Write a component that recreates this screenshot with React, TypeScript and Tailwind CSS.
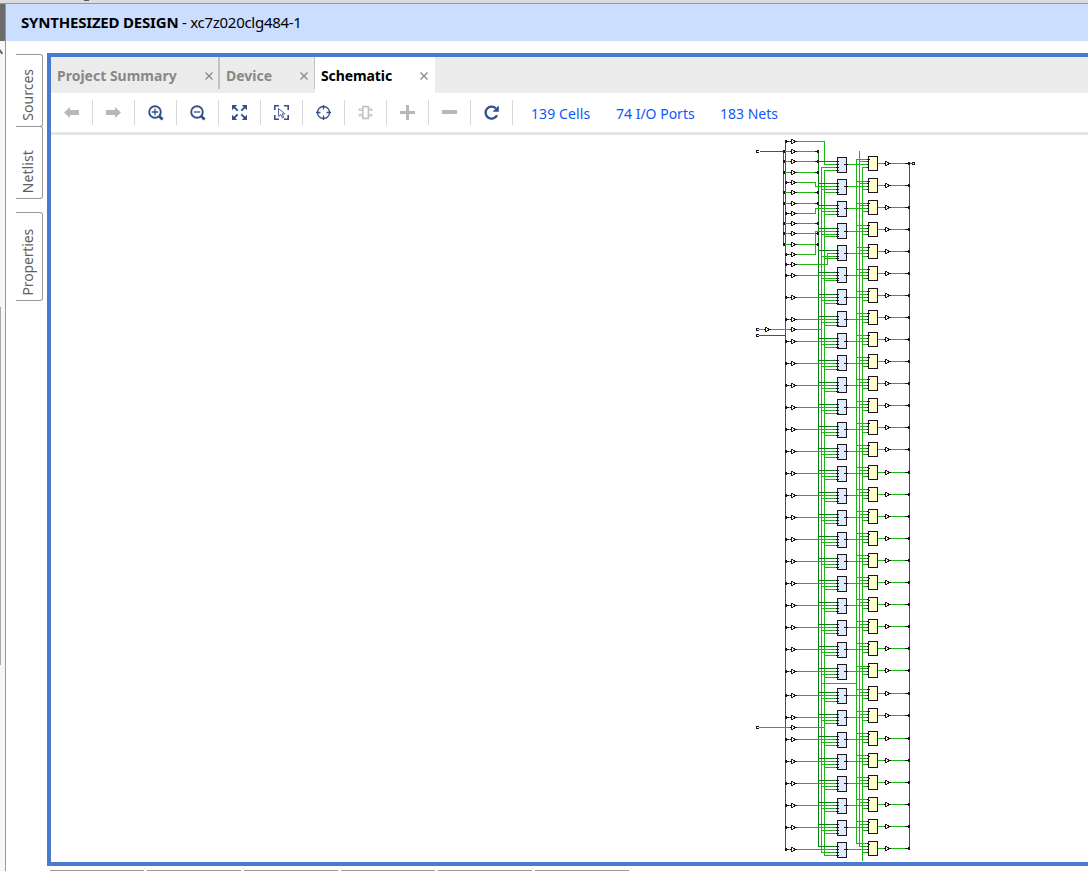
import React from "react";

const LIGHT = "#1eb414";
const DARK = "#078012";
const INK = "#1b1620";

const range = (from: number, count: number, step = 22) =>
  Array.from({ length: count }, (_, i) => from + i * step);

const lutRows = [164, 186, 208, 231, 253, ...range(275, 19), ...range(695, 8)];
const regRows = [...range(163, 14), ...range(472, 10), 693, 715, 738, 760, 782, 804, 826, 848];
const busARows = [151, 161, 172, 192, 203, 223, 233, 244];
const busBRows = [141, 182, 213, 254, 264, ...range(275, 19), ...range(695, 8)];

type LineProps = { y: number; a: number; b: number; c?: string };

/* Horizontal wire covering pixel columns a..b */
const H = ({ y, a, b, c = LIGHT }: LineProps) => (
  <rect x={a} y={y} width={b - a + 1} height={1} fill={c} />
);

type ColProps = { x: number; a: number; b: number; c?: string };

/* Vertical wire covering pixel rows a..b */
const V = ({ x, a, b, c = LIGHT }: ColProps) => (
  <rect x={x} y={a} width={1} height={b - a + 1} fill={c} />
);

const Dot = ({ x, y }: { x: number; y: number }) => (
  <rect x={x} y={y - 1} width={2} height={3} fill={INK} />
);

const Buf = ({ x, y }: { x: number; y: number }) => (
  <g fill={INK}>
    <rect x={x} y={y - 2} width={1} height={5} />
    <rect x={x + 1} y={y - 2} width={1} height={1} />
    <rect x={x + 1} y={y + 2} width={1} height={1} />
    <rect x={x + 1} y={y - 1} width={2} height={3} fill="#fffbd0" />
    <rect x={x + 2} y={y - 1} width={1} height={1} />
    <rect x={x + 2} y={y + 1} width={1} height={1} />
    <rect x={x + 3} y={y - 1} width={1} height={3} />
    <rect x={x + 3} y={y} width={3} height={1} />
    <rect x={x - 1} y={y} width={1} height={1} />
  </g>
);

const Port = ({ x, y, flip }: { x: number; y: number; flip?: boolean }) => (
  <g fill={INK}>
    <rect x={x} y={y - 1} width={3} height={1} />
    <rect x={x} y={y + 1} width={3} height={1} />
    <rect x={flip ? x + 2 : x} y={y - 1} width={1} height={3} />
  </g>
);

function Schematic() {
  return (
    <svg
      className="block h-[727px] w-[1037px]"
      viewBox="51 135 1037 727"
      shapeRendering="crispEdges"
    >
      <V x={783} a={151} b={244} c={DARK} />
      <V x={785} a={141} b={849} c={DARK} />
      <V x={818} a={151} b={846} c={DARK} />
      <V x={821} a={167} b={852} />
      <V x={824} a={170} b={855} />
      <V x={856} a={159} b={843} />
      <V x={859} a={151} b={846} />
      <V x={862} a={167} b={860} />
      <V x={909} a={163} b={848} c={DARK} />

      <H y={151} a={760} b={783} c={DARK} />
      <Port x={756} y={151} />
      <H y={329} a={759} b={821} />
      <Port x={756} y={329} />
      <Buf x={765} y={329} />
      <Buf x={791} y={329} />
      <H y={335} a={759} b={785} c={DARK} />
      <Port x={756} y={335} />
      <H y={727} a={759} b={824} />
      <Port x={756} y={727} />
      <Buf x={791} y={727} />
      <H y={683} a={821} b={856} />

      {busARows.map((y) => (
        <g key={y}>
          <H y={y} a={785} b={818} />
          <Dot x={783} y={y} />
          <Buf x={791} y={y} />
          <H y={y} a={815} b={817} c={INK} />
          <Dot x={817} y={y} />
        </g>
      ))}

      <H y={141} a={796} b={824} />
      <V x={824} a={141} b={164} />
      <H y={182} a={796} b={815} />
      <V x={815} a={182} b={186} />
      <H y={213} a={796} b={815} />
      <V x={815} a={208} b={213} />
      <H y={254} a={796} b={815} />
      <V x={815} a={231} b={254} />
      <H y={264} a={796} b={827} />
      <V x={827} a={253} b={264} />

      {lutRows.map((y, i) => {
        const starts = [824, 815, 815, 815, 827];
        const last = i >= 3 && i <= 5 ? y + 5 : y + 6;
        const top = i < 3 || i === 23 ? y - 5 : y - 6;
        const boxTop = i >= 3 && i <= 11 ? y - 7.5 : y - 6.5;
        return (
          <g key={y}>
            <H y={y - 3} a={818} b={836} c={DARK} />
            <H y={y} a={starts[i] ?? 796} b={836} />
            <H y={y + 3} a={821} b={836} />
            <H y={last} a={824} b={836} />
            <H y={y} a={847} b={867} />
            <H y={top} a={856} b={867} />
            <H y={y - 3} a={859} b={867} />
            <H y={y + 3} a={862} b={867} />
            <rect x={837.5} y={boxTop} width={9} height={15} fill="#deebfa" stroke={INK} />
            {[y - 3, y, y + 3, last].map((p) => (
              <H key={p} y={p} a={836} b={838} c={INK} />
            ))}
            <H y={y} a={844} b={847} c={INK} />
          </g>
        );
      })}

      {regRows.map((y, i) => {
        const b = lutRows[i];
        const top = i < 3 || i === 23 ? b - 5 : b - 6;
        return (
          <g key={y}>
            <rect x={868.5} y={y - 6.5} width={9} height={14} fill="#ffffcc" stroke={INK} />
            {[top, b - 3, b, b + 3].map((p) => (
              <H key={p} y={p} a={867} b={868} c={INK} />
            ))}
            <H y={y - 4} a={868} b={869} c={INK} />
            <H y={y} a={878} b={905} />
            <Buf x={885} y={y} />
            <H y={y} a={905} b={908} c={INK} />
            <Dot x={908} y={y} />
          </g>
        );
      })}

      {busBRows.map((y) => (
        <g key={y}>
          <H y={y} a={788} b={790} />
          <H y={y} a={785} b={788} c={INK} />
          <Dot x={785} y={y} />
          <Buf x={791} y={y} />
        </g>
      ))}
      <H y={163} a={910} b={912} c={DARK} />
      <Port x={912} y={163} flip />
    </svg>
  );
}

const BLUE = "#34508a";
const GRAY = "#b8b8b8";

const icons: React.ReactNode[] = [
  <path d="M0 7.5 6 2v3h9v5H6v3Z" fill={GRAY} />,
  <path d="M15 7.5 9 2v3H0v5h9v3Z" fill={GRAY} />,
  <g stroke={BLUE} fill="none">
    <circle cx="7" cy="7" r="5.8" strokeWidth="1.9" />
    <path d="M3.8 7h6.4M7 3.8v6.4" strokeWidth="1.3" />
    <path d="m11 11 3.6 3.6" strokeWidth="2.8" />
  </g>,
  <g stroke={BLUE} fill="none">
    <circle cx="7" cy="7" r="5.8" strokeWidth="1.9" />
    <path d="M3.8 7h6.4" strokeWidth="1.3" />
    <path d="m11 11 3.6 3.6" strokeWidth="2.8" />
  </g>,
  <g fill={BLUE} stroke={BLUE}>
    <path
      d="M0 0h5.2L0 5.2ZM15 0v5.2L9.8 0ZM0 15V9.8L5.2 15ZM15 15H9.8L15 9.8Z"
      stroke="none"
    />
    <path d="m1.5 1.5 4.2 4.2M13.5 1.5 9.3 5.7M1.5 13.5l4.2-4.2M13.5 13.5 9.3 9.3" strokeWidth="1.8" />
  </g>,
  <g stroke={BLUE} fill="none">
    <path d="M.8 5V.8H5M10 .8h4.2V5M.8 10v4.2H5M10 14.2h4.2V10" strokeWidth="1.6" />
    <path d="m4.5 3.5 6.3 5.3-2.7.2 1.7 3.3-1.3.7-1.7-3.4-2.1 1.9Z" strokeWidth=".9" />
  </g>,
  <g stroke={BLUE} fill="none">
    <circle cx="7.5" cy="7.5" r="6" strokeWidth="1.3" />
    <path d="M7.5 0v4.5M7.5 10.5V15M0 7.5h4.5M10.5 7.5H15" strokeWidth="1.3" />
  </g>,
  <g stroke="#c3c3c3" fill="none" strokeWidth="1.3">
    <path d="M4.8 1.6h5.6v11.8H4.8Z" strokeWidth="1.6" />
    <path d="M4.8 3.9H1v1.6h3.8M4.8 9.5H1v1.6h3.8M10.4 3.9H14v1.6h-3.6M10.4 9.5H14v1.6h-3.6" strokeWidth="1" />
  </g>,
  <path d="M0 7.5h15M7.5 0v15" stroke={GRAY} strokeWidth="3" />,
  <path d="M0 7h15" stroke={GRAY} strokeWidth="4" />,
  <g>
    <path d="M13 10.2A6 6 0 1 1 11.8 3.3" stroke={BLUE} strokeWidth="2.4" fill="none" />
    <path d="M14.8.6v6.2H8.6Z" fill={BLUE} />
  </g>,
];

function Close() {
  return (
    <svg className="h-2 w-2" viewBox="0 0 8 8" stroke="#858585" strokeWidth="1.2">
      <path d="m.5.5 7 7M7.5.5l-7 7" />
    </svg>
  );
}

function SideTab({ label, size, text = "" }: { label: string; size: string; text?: string }) {
  return (
    <div
      className={`flex w-[27px] items-end justify-center rounded-r-[3px] border-y border-r border-[#999] pr-[3px] pb-[5px] ${size}`}
    >
      <span
        className={`rotate-180 text-[14px] leading-[20px] text-[#606060] [writing-mode:vertical-rl] ${text}`}
      >
        {label}
      </span>
    </div>
  );
}

export default function App() {
  return (
    <div className="flex h-[871px] w-[1088px] flex-col overflow-hidden bg-white font-['Noto_Sans','Open_Sans',sans-serif]">
      <div className="flex h-1 shrink-0 border-b border-[#999] bg-[#dcdcdc] pl-[84px]">
        <div className="h-px w-[5px] bg-[#555]" />
      </div>
      <div className="flex min-h-0 flex-1">
        <div className="flex w-[6px] shrink-0 flex-col border-r border-[#999] bg-[#f7f7f7]">
          <div className="h-[37px] bg-[#6b6b6b]" />
          <svg className="mt-[7px] h-[7px] w-1" viewBox="0 0 4 7">
            <path d="m0 1 3 4-1 1.5-2-2Z" fill="#666" />
          </svg>
          <div className="mt-[252px] h-[358px] w-px bg-[#aaa]" />
        </div>
        <div className="flex min-w-0 flex-1 flex-col">
          <header className="flex h-[37px] shrink-0 items-center bg-[#ccdeff] pl-[15px] text-[15px] whitespace-pre text-black">
            <span className="font-bold tracking-[-0.2px]">SYNTHESIZED DESIGN</span>
            <span className="tracking-[-0.28px]"> - xc7z020clg484-1</span>
          </header>
          <div className="flex h-[825px] shrink-0 pt-3">
            <aside className="flex w-[41px] shrink-0 flex-col pt-px pl-[10px]">
              <SideTab label="Sources" size="h-[73px]" />
              <SideTab label="Netlist" size="-mt-px h-[73px]" text="tracking-[0.1px]" />
              <SideTab label="Properties" size="mt-[13px] h-[89px]" text="tracking-[-0.15px]" />
            </aside>
            <main className="flex w-[1041px] shrink-0 flex-col border-y-4 border-l-4 border-[#487bce]">
              <div className="flex h-9 shrink-0 bg-[#ececec] text-[14px] font-bold text-[#888]">
                <div className="flex h-8 w-[169px] items-center justify-between border-r-2 border-[#c2c2c2] pt-[5px] pr-[5px] pl-[6px]">
                  <span>Project Summary</span>
                  <Close />
                </div>
                <div className="flex h-8 w-[95px] items-center justify-between border-r border-[#c2c2c2] pt-[5px] pr-[6px] pl-[6px]">
                  <span>Device</span>
                  <Close />
                </div>
                <div className="flex w-[120px] items-center justify-between bg-white pt-px pr-[7px] pl-[6px] text-black">
                  <span className="tracking-[-0.1px]">Schematic</span>
                  <Close />
                </div>
              </div>
              <div className="flex h-[42px] shrink-0 border-b-[3px] border-[#e6e6e6] pt-[7px] text-[14px] text-[#0f57fa]">
                {icons.map((icon, i) => (
                  <div
                    key={i}
                    className="flex h-[25px] w-[42px] shrink-0 justify-center border-r border-[#d8d8d8] pt-[5px]"
                  >
                    <svg className="h-[15px] w-[15px] overflow-visible" viewBox="0 0 15 15">
                      {icon}
                    </svg>
                  </div>
                ))}
                <div className="flex h-[26px] items-center pl-[18px] whitespace-nowrap">
                  <span className="w-[85px] tracking-[0.1px]">139 Cells</span>
                  <span className="w-[104px]">74 I/O Ports</span>
                  <span>183 Nets</span>
                </div>
              </div>
              <Schematic />
            </main>
          </div>
          <div className="mt-[4px] flex gap-[3px] pl-11">
            {range(0, 6).map((k) => (
              <div key={k} className="h-px w-[94px] bg-[#999]" />
            ))}
          </div>
        </div>
      </div>
    </div>
  );
}
